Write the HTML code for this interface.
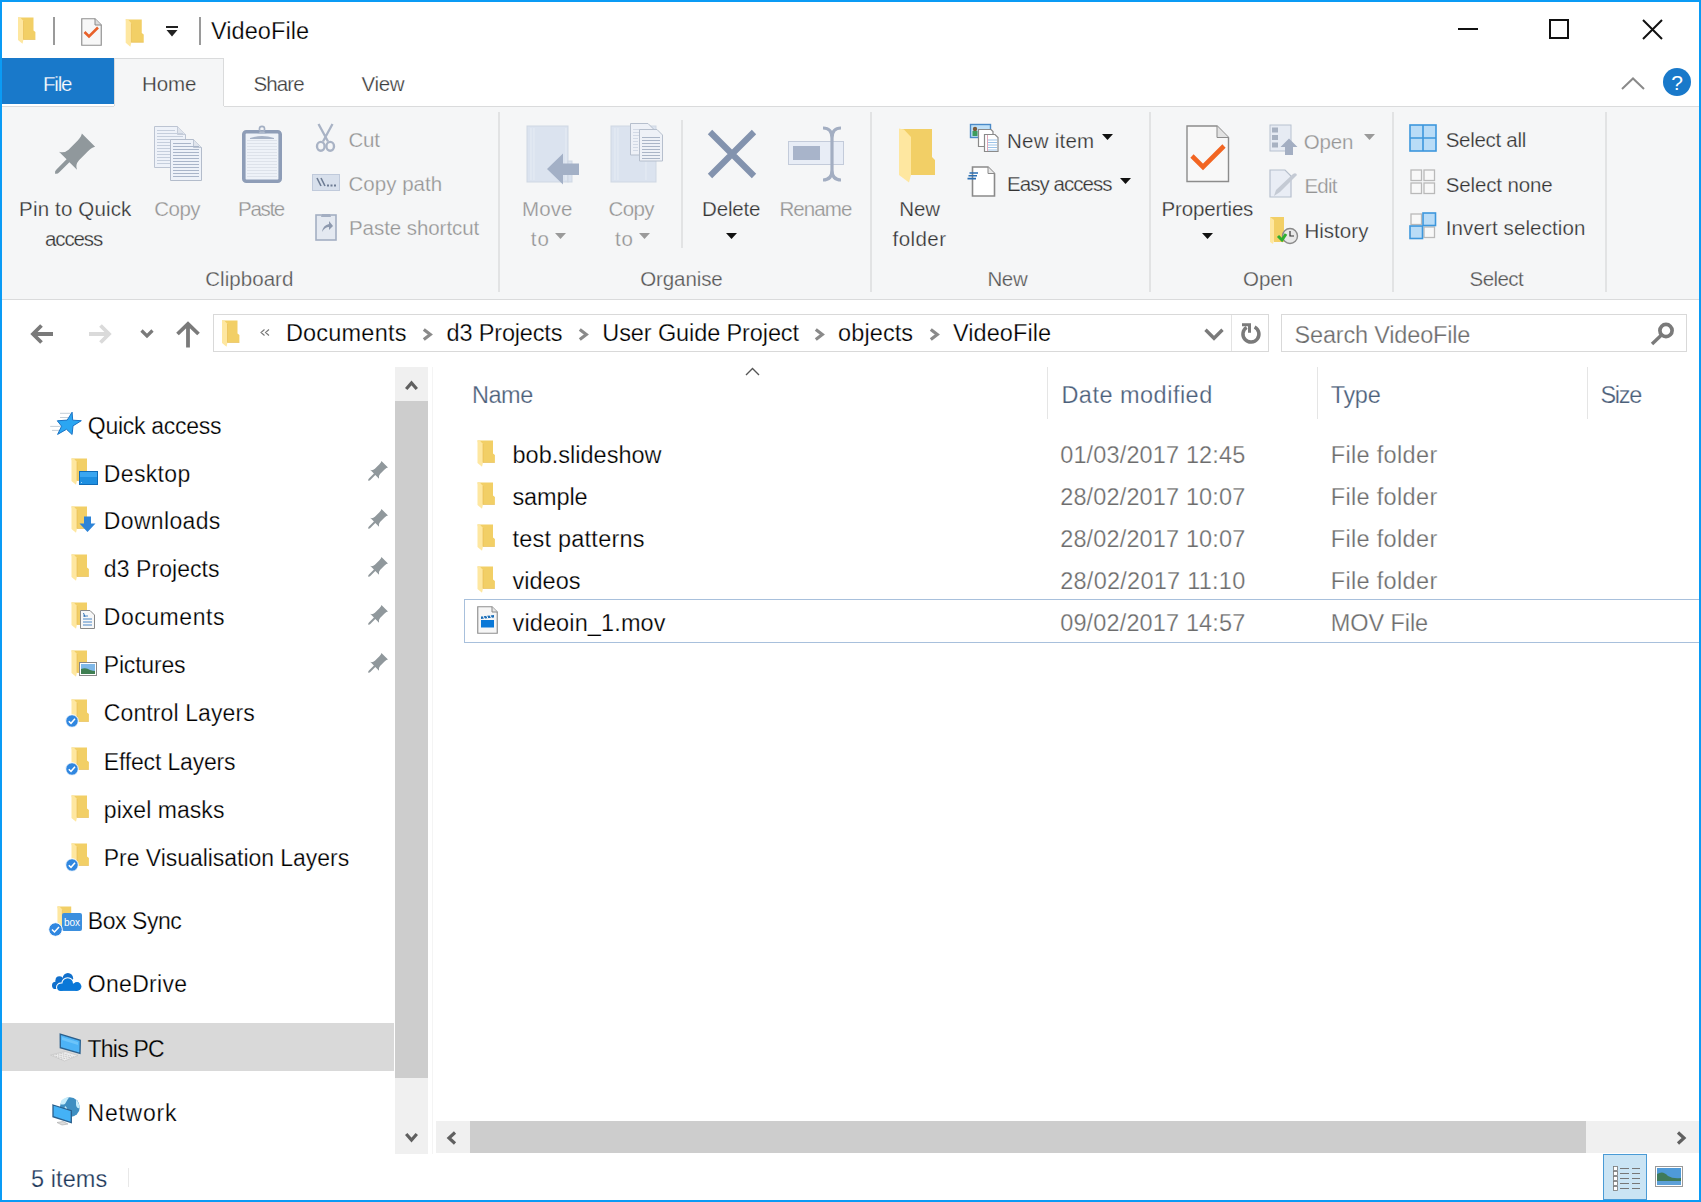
<!DOCTYPE html><html><head><meta charset="utf-8"><style>
html,body{margin:0;padding:0;width:1701px;height:1202px;overflow:hidden;background:#fff}
body{position:relative;font-family:"Liberation Sans",sans-serif}
.t{position:absolute;white-space:nowrap}
svg{overflow:visible}
</style></head><body>
<div style="position:absolute;left:0px;top:0px;width:1701px;height:1202px;background:#0a9bf5"></div>
<div style="position:absolute;left:2px;top:2px;width:1697px;height:1198px;background:#ffffff"></div>
<svg style="position:absolute;left:17px;top:17px" width="19" height="27" viewBox="0 0 18 27"><path d="M0.5 0.5 H16 V13.5 L17.9 15 V22.5 H5.5 Z" fill="#f2cf66"/><path d="M0.5 0.3 L3 0.8 L6 4 V22.5 L5 26.7 L0.5 23 Z" fill="#fee7a0"/><path d="M6 4 V22.5 H17.8" fill="none" stroke="#e6bb4e" stroke-width="0.6"/></svg>
<div style="position:absolute;left:53px;top:17px;width:2px;height:28px;background:#9a9a9a"></div>
<svg style="position:absolute;left:81px;top:18px" width="21" height="28" viewBox="0 0 21 28"><path d="M0.75 0.75 H14 L20.25 7 V27.25 H0.75 Z" fill="#f7f7f7" stroke="#8e8e8e" stroke-width="1.15"/><path d="M14 0.75 V7 H20.25" fill="#dcdcdc" stroke="#8a8a8a" stroke-width="1"/><path d="M3.5 14 L8 18.5 L17 9.5" fill="none" stroke="#e8612a" stroke-width="2.6"/></svg>
<svg style="position:absolute;left:125px;top:19px" width="19" height="28" viewBox="0 0 18 27"><path d="M0.5 0.5 H16 V13.5 L17.9 15 V22.5 H5.5 Z" fill="#f2cf66"/><path d="M0.5 0.3 L3 0.8 L6 4 V22.5 L5 26.7 L0.5 23 Z" fill="#fee7a0"/><path d="M6 4 V22.5 H17.8" fill="none" stroke="#e6bb4e" stroke-width="0.6"/></svg>
<svg style="position:absolute;left:166px;top:26px" width="12" height="11" viewBox="0 0 12 11"><rect x="0" y="0" width="12" height="2" fill="#222"/><path d="M0.5 4 H11.5 L6 10.5 Z" fill="#222"/></svg>
<div style="position:absolute;left:199px;top:17px;width:2px;height:28px;background:#9a9a9a"></div>
<div class="t" style="left:211.0px;top:19.51px;font-size:23.5px;line-height:23.5px;color:#000;letter-spacing:0.061px;-webkit-text-stroke:0.25px #ffffff;">VideoFile</div>
<div style="position:absolute;left:1458px;top:28px;width:20px;height:2px;background:#111"></div>
<div style="position:absolute;left:1549px;top:19px;width:20px;height:20px;border:2px solid #111;box-sizing:border-box"></div>
<svg style="position:absolute;left:1642px;top:19px" width="21" height="21" viewBox="0 0 21 21"><path d="M1 1 L20 20 M20 1 L1 20" stroke="#111" stroke-width="2"/></svg>
<div style="position:absolute;left:2px;top:58px;width:112px;height:46px;background:#1979ca"></div>
<div class="t" style="left:43.0px;top:74.25px;font-size:20.5px;line-height:20.5px;color:#ffffff;letter-spacing:-1.172px;-webkit-text-stroke:0.25px #1979ca;">File</div>
<div style="position:absolute;left:114px;top:58px;width:110px;height:49px;background:#f5f6f7;border:1px solid #dadbdc;border-bottom:none;box-sizing:border-box"></div>
<div class="t" style="left:142.0px;top:74.25px;font-size:20.5px;line-height:20.5px;color:#3c3c3c;letter-spacing:-0.062px;-webkit-text-stroke:0.25px #f5f6f7;">Home</div>
<div class="t" style="left:253.6px;top:74.25px;font-size:20.5px;line-height:20.5px;color:#3c3c3c;letter-spacing:-0.930px;-webkit-text-stroke:0.25px #ffffff;">Share</div>
<div class="t" style="left:361.6px;top:74.25px;font-size:20.5px;line-height:20.5px;color:#3c3c3c;letter-spacing:-0.349px;-webkit-text-stroke:0.25px #ffffff;">View</div>
<svg style="position:absolute;left:1621px;top:77px" width="24" height="13" viewBox="0 0 24 13"><path d="M1 12 L12 1.5 L23 12" fill="none" stroke="#8a8a8a" stroke-width="2"/></svg>
<svg style="position:absolute;left:1663px;top:68px" width="28" height="28" viewBox="0 0 28 28"><circle cx="14" cy="14" r="14" fill="#1979ca"/><text x="14" y="22" font-family="Liberation Sans" font-size="21" fill="#fff" text-anchor="middle">?</text></svg>
<div style="position:absolute;left:2px;top:106px;width:1697px;height:194px;background:#f5f6f7;border-top:1px solid #dadbdc;border-bottom:1px solid #dadbdc;box-sizing:border-box"></div>
<div style="position:absolute;left:114px;top:106px;width:110px;height:2px;background:#f5f6f7"></div>
<div style="position:absolute;left:498px;top:112px;width:2px;height:180px;background:#e2e3e4"></div>
<div style="position:absolute;left:870px;top:112px;width:2px;height:180px;background:#e2e3e4"></div>
<div style="position:absolute;left:1149px;top:112px;width:2px;height:180px;background:#e2e3e4"></div>
<div style="position:absolute;left:1392px;top:112px;width:2px;height:180px;background:#e2e3e4"></div>
<div style="position:absolute;left:1605px;top:112px;width:2px;height:180px;background:#e2e3e4"></div>
<div style="position:absolute;left:681px;top:120px;width:2px;height:128px;background:#e2e3e4"></div>
<div class="t" style="left:205.2px;top:269.05px;font-size:20.5px;line-height:20.5px;color:#555555;letter-spacing:0.056px;-webkit-text-stroke:0.25px #f5f6f7;">Clipboard</div>
<div class="t" style="left:640.2px;top:269.05px;font-size:20.5px;line-height:20.5px;color:#555555;letter-spacing:-0.086px;-webkit-text-stroke:0.25px #f5f6f7;">Organise</div>
<div class="t" style="left:987.4px;top:269.05px;font-size:20.5px;line-height:20.5px;color:#555555;letter-spacing:-0.350px;-webkit-text-stroke:0.25px #f5f6f7;">New</div>
<div class="t" style="left:1243.0px;top:269.05px;font-size:20.5px;line-height:20.5px;color:#555555;letter-spacing:-0.057px;-webkit-text-stroke:0.25px #f5f6f7;">Open</div>
<div class="t" style="left:1469.6px;top:269.05px;font-size:20.5px;line-height:20.5px;color:#555555;letter-spacing:-0.577px;-webkit-text-stroke:0.25px #f5f6f7;">Select</div>
<svg style="position:absolute;left:50px;top:128px" width="50" height="50" viewBox="0 0 50 50"><g transform="translate(5.4 45.3) rotate(45)"><path d="M0 0.5 Q-2.2 -1 -2 -3.5 L-2 -17.8 L-12.7 -17.8 Q-7.8 -20 -7.4 -26 L-7.4 -39 Q-7.6 -44.5 -9.4 -46.8 L9.4 -46.8 Q7.6 -44.5 7.4 -39 L7.4 -26 Q7.8 -20 12.7 -17.8 L2 -17.8 L2 -3.5 Q2.2 -1 0 0.5 Z" fill="#90989c"/></g></svg>
<div class="t" style="left:19.1px;top:199.45px;font-size:20.5px;line-height:20.5px;color:#333333;letter-spacing:0.159px;-webkit-text-stroke:0.25px #f5f6f7;">Pin to Quick</div>
<div class="t" style="left:45.0px;top:229.25px;font-size:20.5px;line-height:20.5px;color:#333333;letter-spacing:-1.122px;-webkit-text-stroke:0.25px #f5f6f7;">access</div>
<svg style="position:absolute;left:153px;top:125px" width="50" height="57" viewBox="0 0 50 57"><path d="M1.5 1.5 H24.5 L32.5 9.5 V42.5 H1.5 Z" fill="#eef2f9" stroke="#bcc4d2" stroke-width="1"/><path d="M24.5 1.5 V9.5 H32.5" fill="#dfe4ec" stroke="#bcc4d2" stroke-width="0.8"/><g stroke="#c5cedc" stroke-width="1"><path d="M4 5.5 H22"/><path d="M4 8.5 H30"/><path d="M4 11.5 H30"/><path d="M4 14.5 H30"/><path d="M4 17.5 H30"/><path d="M4 20.5 H30"/><path d="M4 23.5 H30"/><path d="M4 26.5 H30"/><path d="M4 29.5 H30"/><path d="M4 32.5 H30"/><path d="M4 35.5 H30"/><path d="M4 38.5 H30"/></g><path d="M17.5 14.5 H40.5 L48.5 22.5 V55.5 H17.5 Z" fill="#eef2f9" stroke="#b3bccb" stroke-width="1"/><path d="M40.5 14.5 V22.5 H48.5" fill="#dfe4ec" stroke="#b3bccb" stroke-width="0.8"/><g stroke="#a9b5c9" stroke-width="1"><path d="M20 18.5 H38"/><path d="M20 21.5 H46"/><path d="M20 24.5 H46"/><path d="M20 27.5 H46"/><path d="M20 30.5 H46"/><path d="M20 33.5 H46"/><path d="M20 36.5 H46"/><path d="M20 39.5 H46"/><path d="M20 42.5 H46"/><path d="M20 45.5 H46"/><path d="M20 48.5 H46"/><path d="M20 51.5 H46"/></g></svg>
<div class="t" style="left:154.3px;top:199.45px;font-size:20.5px;line-height:20.5px;color:#949494;letter-spacing:-0.553px;-webkit-text-stroke:0.25px #f5f6f7;">Copy</div>
<svg style="position:absolute;left:241px;top:125px" width="42" height="58" viewBox="0 0 42 58"><rect x="2.8" y="6.8" width="36.4" height="49.4" rx="2.5" fill="#eef2f8" stroke="#8e9db7" stroke-width="3.6"/><g stroke="#dde2ea" stroke-width="1"><path d="M6 15.5 H36"/><path d="M6 18.5 H36"/><path d="M6 21.5 H36"/><path d="M6 24.5 H36"/><path d="M6 27.5 H36"/><path d="M6 30.5 H36"/><path d="M6 33.5 H36"/><path d="M6 36.5 H36"/><path d="M6 39.5 H36"/><path d="M6 42.5 H36"/><path d="M6 45.5 H36"/><path d="M6 48.5 H36"/><path d="M6 51.5 H36"/></g><path d="M9 13 Q21 9 33 13 V14 H9 Z" fill="#a6b2c6"/><path d="M16 9 Q21 4 26 9 Z" fill="#b4bfd1"/><circle cx="21" cy="4" r="2.6" fill="none" stroke="#a3afc3" stroke-width="1.6"/></svg>
<div class="t" style="left:238.1px;top:199.45px;font-size:20.5px;line-height:20.5px;color:#949494;letter-spacing:-1.334px;-webkit-text-stroke:0.25px #f5f6f7;">Paste</div>
<svg style="position:absolute;left:315px;top:123px" width="21" height="30" viewBox="0 0 21 30"><path d="M3.5 1 L13 18.5 M17.5 1 L8 18.5" stroke="#a9b3c5" stroke-width="2.3" fill="none"/><ellipse cx="5.8" cy="23.3" rx="3.8" ry="4.4" fill="none" stroke="#a9b3c5" stroke-width="2.4"/><ellipse cx="15.2" cy="23.3" rx="3.8" ry="4.4" fill="none" stroke="#a9b3c5" stroke-width="2.4"/></svg>
<div class="t" style="left:348.5px;top:130.35px;font-size:20.5px;line-height:20.5px;color:#949494;letter-spacing:-0.203px;-webkit-text-stroke:0.25px #f5f6f7;">Cut</div>
<svg style="position:absolute;left:312px;top:174px" width="28" height="17" viewBox="0 0 28 17"><rect x="0.5" y="0.5" width="27" height="16" fill="#d8e0ec" stroke="#c0cadb"/><path d="M5 4 L9 12 M9 4 L13 12" stroke="#6e7c94" stroke-width="1.6"/><path d="M15 11.5 H17 M18.5 11.5 H20.5 M22 11.5 H24" stroke="#6e7c94" stroke-width="2"/></svg>
<div class="t" style="left:348.5px;top:174.25px;font-size:20.5px;line-height:20.5px;color:#949494;letter-spacing:0.027px;-webkit-text-stroke:0.25px #f5f6f7;">Copy path</div>
<svg style="position:absolute;left:315px;top:211px" width="22" height="30" viewBox="0 0 22 30"><rect x="1" y="4" width="20" height="25" fill="#e4e9f1" stroke="#a3aec2" stroke-width="1.6"/><path d="M7 3 H15 L16 6 H6 Z" fill="#a3aec2"/><path d="M7 21 Q8 14 14 13 V10 L18 15 L14 19 V16 Q10 16 7 21 Z" fill="#8d99ae"/></svg>
<div class="t" style="left:349.0px;top:217.75px;font-size:20.5px;line-height:20.5px;color:#949494;letter-spacing:-0.061px;-webkit-text-stroke:0.25px #f5f6f7;">Paste shortcut</div>
<svg style="position:absolute;left:526px;top:122px" width="56" height="64" viewBox="0 0 56 64"><rect x="1" y="4" width="41" height="56" fill="#dbe3ef" stroke="#cfd7e3"/><rect x="42" y="39" width="4" height="21" fill="#dbe3ef" stroke="#cfd7e3"/><path d="M5 6 V58 M8 6 V58 M40 6 V58" stroke="#e6ecf4" stroke-width="1"/><path d="M21 47 L37 31.5 V41.5 H53 V53 H37 V62.5 Z" fill="#a3b0c6"/></svg>
<div class="t" style="left:522.0px;top:199.45px;font-size:20.5px;line-height:20.5px;color:#949494;letter-spacing:0.120px;-webkit-text-stroke:0.25px #f5f6f7;">Move</div>
<div class="t" style="left:530.8px;top:229.25px;font-size:20.5px;line-height:20.5px;color:#949494;letter-spacing:0.891px;-webkit-text-stroke:0.25px #f5f6f7;">to</div>
<svg style="position:absolute;left:555px;top:233px" width="11" height="6" viewBox="0 0 11 6"><path d="M0 0 H11 L5.5 6 Z" fill="#9a9a9a"/></svg>
<svg style="position:absolute;left:610px;top:122px" width="54" height="62" viewBox="0 0 54 62"><rect x="1" y="4" width="45" height="56" fill="#dbe3ef" stroke="#cfd7e3"/><path d="M5 6 V58 M8 6 V58 M36 40 V58" stroke="#e6ecf4" stroke-width="1"/><path d="M20.5 1.5 H38 L44 7.5 V33 H20.5 Z" fill="#eef1f7" stroke="#b6bfcd"/><g stroke="#d3dae6"><path d="M23 7.5 H36 M23 10.5 H36 M23 13.5 H36 M23 16.5 H28 M23 19.5 H28 M23 22.5 H28 M23 25.5 H28 M23 28.5 H28"/></g><path d="M29.5 7.5 H47 L52.5 13 V39 H29.5 Z" fill="#eef1f7" stroke="#b6bfcd"/><g stroke="#aab5c7"><path d="M32 15.5 H50 M32 18.5 H50 M32 21.5 H50 M32 24.5 H50 M32 27.5 H50 M32 30.5 H50 M32 33.5 H50 M32 36.5 H50"/></g></svg>
<div class="t" style="left:608.5px;top:199.45px;font-size:20.5px;line-height:20.5px;color:#949494;letter-spacing:-0.620px;-webkit-text-stroke:0.25px #f5f6f7;">Copy</div>
<div class="t" style="left:615.0px;top:229.25px;font-size:20.5px;line-height:20.5px;color:#949494;letter-spacing:0.891px;-webkit-text-stroke:0.25px #f5f6f7;">to</div>
<svg style="position:absolute;left:639px;top:233px" width="11" height="6" viewBox="0 0 11 6"><path d="M0 0 H11 L5.5 6 Z" fill="#9a9a9a"/></svg>
<svg style="position:absolute;left:707px;top:129px" width="50" height="50" viewBox="0 0 50 50"><path d="M3 3 L47 47 M47 3 L3 47" stroke="#8393ae" stroke-width="6.2"/></svg>
<div class="t" style="left:702.0px;top:199.45px;font-size:20.5px;line-height:20.5px;color:#333333;letter-spacing:-0.153px;-webkit-text-stroke:0.25px #f5f6f7;">Delete</div>
<svg style="position:absolute;left:726px;top:233px" width="11" height="6" viewBox="0 0 11 6"><path d="M0 0 H11 L5.5 6 Z" fill="#111"/></svg>
<svg style="position:absolute;left:787px;top:126px" width="58" height="56" viewBox="0 0 58 56"><rect x="1.5" y="15.5" width="55" height="23" fill="#e8edf6" stroke="#c3cbda"/><rect x="6" y="20" width="27" height="14" fill="#a8b4ca"/><path d="M36 2 Q45 2 45 12 V44 Q45 54 36 54 M54 2 Q45 2 45 12 M54 54 Q45 54 45 44" fill="none" stroke="#a3aec2" stroke-width="3.2"/></svg>
<div class="t" style="left:779.4px;top:199.45px;font-size:20.5px;line-height:20.5px;color:#949494;letter-spacing:-0.900px;-webkit-text-stroke:0.25px #f5f6f7;">Rename</div>
<svg style="position:absolute;left:898px;top:128px" width="38" height="55" viewBox="0 0 38 55"><path d="M1 1 H34 V29 L37 32 V47 H12 Z" fill="#f2cf66"/><path d="M1 0.5 L6 1.5 L13 9 V47 L11 54.5 L1 47 Z" fill="#fee7a0"/></svg>
<div class="t" style="left:899.3px;top:199.45px;font-size:20.5px;line-height:20.5px;color:#333333;letter-spacing:-0.150px;-webkit-text-stroke:0.25px #f5f6f7;">New</div>
<div class="t" style="left:892.5px;top:229.25px;font-size:20.5px;line-height:20.5px;color:#333333;letter-spacing:0.441px;-webkit-text-stroke:0.25px #f5f6f7;">folder</div>
<svg style="position:absolute;left:969px;top:123px" width="30" height="30" viewBox="0 0 30 30"><rect x="1.5" y="1.5" width="20" height="13" fill="#bfe0f7" stroke="#4a8ac8" stroke-width="1.4"/><circle cx="6" cy="6" r="2.2" fill="#7b5a3a"/><rect x="3.5" y="8" width="5" height="5" fill="#3c9b5e"/><path d="M9.5 6.5 H22 L24 8.5 V23.5 H9.5 Z" fill="#fff" stroke="#8a8a8a" stroke-width="1.2"/><path d="M15.5 11.5 H26 L29 14.5 V28.5 H15.5 Z" fill="#fff" stroke="#8a8a8a" stroke-width="1.2"/><g stroke="#9cc3e8" stroke-width="1"><path d="M19 17 H28 M19 19.5 H28 M19 22 H28 M19 24.5 H28 M19 27 H28"/></g><path d="M18.5 12 V28" stroke="#e0a8b8" stroke-width="1"/></svg>
<div class="t" style="left:1007.1px;top:130.65px;font-size:20.5px;line-height:20.5px;color:#333333;letter-spacing:0.223px;-webkit-text-stroke:0.25px #f5f6f7;">New item</div>
<svg style="position:absolute;left:1102px;top:134px" width="11" height="6" viewBox="0 0 11 6"><path d="M0 0 H11 L5.5 6 Z" fill="#111"/></svg>
<svg style="position:absolute;left:967px;top:166px" width="29" height="31" viewBox="0 0 29 31"><path d="M5.5 1 H21 L27.5 7.5 V30 H5.5 Z" fill="#fff" stroke="#8a8a8a" stroke-width="1.6"/><path d="M21 1 V7.5 H27.5" fill="#e8e8e8" stroke="#8a8a8a" stroke-width="1"/><path d="M2.5 7 H11 M1.5 9.8 H10 M0.5 12.6 H9" stroke="#2b6fb3" stroke-width="1.6"/></svg>
<div class="t" style="left:1007.0px;top:174.25px;font-size:20.5px;line-height:20.5px;color:#333333;letter-spacing:-0.959px;-webkit-text-stroke:0.25px #f5f6f7;">Easy access</div>
<svg style="position:absolute;left:1120px;top:178px" width="11" height="6" viewBox="0 0 11 6"><path d="M0 0 H11 L5.5 6 Z" fill="#111"/></svg>
<svg style="position:absolute;left:1186px;top:125px" width="44" height="58" viewBox="0 0 44 58"><path d="M1 1 H31 L42.5 12.5 V56.5 H1 Z" fill="#f8f8f8" stroke="#8c8c8c" stroke-width="1.4"/><path d="M31 1 V12.5 H42.5" fill="#e2e2e2" stroke="#8c8c8c" stroke-width="1"/><path d="M6 31 L17 42 L38 21" fill="none" stroke="#f26522" stroke-width="4.6"/></svg>
<div class="t" style="left:1161.6px;top:199.45px;font-size:20.5px;line-height:20.5px;color:#333333;letter-spacing:-0.184px;-webkit-text-stroke:0.25px #f5f6f7;">Properties</div>
<svg style="position:absolute;left:1202px;top:233px" width="11" height="6" viewBox="0 0 11 6"><path d="M0 0 H11 L5.5 6 Z" fill="#111"/></svg>
<svg style="position:absolute;left:1269px;top:124px" width="30" height="32" viewBox="0 0 30 32"><rect x="1" y="1" width="21" height="26" fill="#e6ebf3" stroke="#b8c1d0"/><rect x="3" y="3.5" width="6" height="5" fill="#a8b2c2"/><rect x="3" y="11" width="6" height="5" fill="#a8b2c2"/><rect x="3" y="18.5" width="6" height="5" fill="#a8b2c2"/><path d="M11.5 23 L20 14.5 L28.5 23 H24 V31 H16 V23 Z" fill="#a3aec2"/></svg>
<div class="t" style="left:1303.8px;top:131.95px;font-size:20.5px;line-height:20.5px;color:#949494;letter-spacing:-0.191px;-webkit-text-stroke:0.25px #f5f6f7;">Open</div>
<svg style="position:absolute;left:1364px;top:134px" width="11" height="6" viewBox="0 0 11 6"><path d="M0 0 H11 L5.5 6 Z" fill="#9a9a9a"/></svg>
<svg style="position:absolute;left:1269px;top:169px" width="30" height="30" viewBox="0 0 30 30"><path d="M1 1 H16 L22 7 V28 H1 Z" fill="#e9edf5" stroke="#b6bfcd" stroke-width="1.2"/><path d="M5 27 L7 21 L24 5 Q27 3 28 6 L11 23 Z" fill="#c4cad4"/></svg>
<div class="t" style="left:1304.4px;top:176.45px;font-size:20.5px;line-height:20.5px;color:#949494;letter-spacing:-0.776px;-webkit-text-stroke:0.25px #f5f6f7;">Edit</div>
<svg style="position:absolute;left:1269px;top:216px" width="30" height="30" viewBox="0 0 30 30"><path d="M1 1 H15 V26 H5 Z" fill="#f2cf66"/><path d="M1 1 L5 4 V24 L4 28 L1 26 Z" fill="#fee7a0"/><circle cx="21" cy="20" r="7.5" fill="#e8e8e8" stroke="#8a8a8a" stroke-width="1.4"/><path d="M21 15 V20 H25" stroke="#333" stroke-width="1.2" fill="none"/><path d="M9 20 L13 24 L17 18" stroke="#2fae2f" stroke-width="3" fill="none"/></svg>
<div class="t" style="left:1304.4px;top:221.05px;font-size:20.5px;line-height:20.5px;color:#333333;letter-spacing:0.036px;-webkit-text-stroke:0.25px #f5f6f7;">History</div>
<svg style="position:absolute;left:1409px;top:124px" width="28" height="28" viewBox="0 0 28 28"><rect x="1" y="1" width="26" height="26" fill="#b9dcf7" stroke="#3d97dc" stroke-width="1.6"/><path d="M14 1 V27 M1 14 H27" stroke="#3d97dc" stroke-width="1.6"/></svg>
<div class="t" style="left:1445.7px;top:130.15px;font-size:20.5px;line-height:20.5px;color:#333333;letter-spacing:-0.288px;-webkit-text-stroke:0.25px #f5f6f7;">Select all</div>
<svg style="position:absolute;left:1410px;top:169px" width="26" height="26" viewBox="0 0 26 26"><g fill="#f8f8f8" stroke="#b9b9b9" stroke-width="1.3"><rect x="1" y="1" width="10.5" height="10.5"/><rect x="14" y="1" width="10.5" height="10.5"/><rect x="1" y="14" width="10.5" height="10.5"/><rect x="14" y="14" width="10.5" height="10.5"/></g></svg>
<div class="t" style="left:1445.7px;top:174.65px;font-size:20.5px;line-height:20.5px;color:#333333;letter-spacing:-0.131px;-webkit-text-stroke:0.25px #f5f6f7;">Select none</div>
<svg style="position:absolute;left:1409px;top:212px" width="28" height="28" viewBox="0 0 28 28"><g fill="#f8f8f8" stroke="#b9b9b9" stroke-width="1.3"><rect x="2" y="2" width="10.5" height="10.5"/><rect x="15" y="15" width="10.5" height="10.5"/></g><g fill="#b9dcf7" stroke="#3d97dc" stroke-width="1.6"><rect x="14" y="1" width="12.5" height="12.5"/><rect x="1" y="14" width="12.5" height="12.5"/></g></svg>
<div class="t" style="left:1445.7px;top:218.35px;font-size:20.5px;line-height:20.5px;color:#333333;letter-spacing:0.125px;-webkit-text-stroke:0.25px #f5f6f7;">Invert selection</div>
<svg style="position:absolute;left:30px;top:324px" width="24" height="20" viewBox="0 0 24 20"><path d="M11.5 1.5 L3 10 L11.5 18.5 M3.5 10 H23" fill="none" stroke="#7a7a7a" stroke-width="3.8"/></svg>
<svg style="position:absolute;left:88px;top:324px" width="24" height="20" viewBox="0 0 24 20"><path d="M12.5 1.5 L21 10 L12.5 18.5 M20.5 10 H1" fill="none" stroke="#dadada" stroke-width="3.8"/></svg>
<svg style="position:absolute;left:140px;top:329px" width="14" height="10" viewBox="0 0 14 10"><path d="M1.5 1.5 L7 7 L12.5 1.5" fill="none" stroke="#7a7a7a" stroke-width="3.2"/></svg>
<svg style="position:absolute;left:176px;top:322px" width="24" height="26" viewBox="0 0 24 26"><path d="M1.5 12 L12 1.8 L22.5 12 M12 2.5 V25.5" fill="none" stroke="#7a7a7a" stroke-width="3.8"/></svg>
<div style="position:absolute;left:213px;top:314px;width:1056px;height:38px;border:1px solid #d9d9d9;box-sizing:border-box;background:#fff"></div>
<div style="position:absolute;left:1231px;top:315px;width:1px;height:36px;background:#e3e3e3"></div>
<svg style="position:absolute;left:221px;top:320px" width="19" height="27" viewBox="0 0 18 27"><path d="M0.5 0.5 H16 V13.5 L17.9 15 V22.5 H5.5 Z" fill="#f2cf66"/><path d="M0.5 0.3 L3 0.8 L6 4 V22.5 L5 26.7 L0.5 23 Z" fill="#fee7a0"/><path d="M6 4 V22.5 H17.8" fill="none" stroke="#e6bb4e" stroke-width="0.6"/></svg>
<svg style="position:absolute;left:260px;top:329px" width="10" height="7" viewBox="0 0 10 7"><path d="M4.5 0.5 L1 3.5 L4.5 6.5 M9 0.5 L5.5 3.5 L9 6.5" fill="none" stroke="#777" stroke-width="1.1"/></svg>
<div class="t" style="left:285.9px;top:322.41px;font-size:23.5px;line-height:23.5px;color:#000;letter-spacing:0.209px;-webkit-text-stroke:0.25px #ffffff;">Documents</div>
<div class="t" style="left:446.6px;top:322.41px;font-size:23.5px;line-height:23.5px;color:#000;letter-spacing:-0.173px;-webkit-text-stroke:0.25px #ffffff;">d3 Projects</div>
<div class="t" style="left:602.3px;top:322.41px;font-size:23.5px;line-height:23.5px;color:#000;letter-spacing:-0.105px;-webkit-text-stroke:0.25px #ffffff;">User Guide Project</div>
<div class="t" style="left:838.1px;top:322.41px;font-size:23.5px;line-height:23.5px;color:#000;letter-spacing:0.094px;-webkit-text-stroke:0.25px #ffffff;">objects</div>
<div class="t" style="left:953.0px;top:322.41px;font-size:23.5px;line-height:23.5px;color:#000;letter-spacing:0.061px;-webkit-text-stroke:0.25px #ffffff;">VideoFile</div>
<svg style="position:absolute;left:422px;top:328px" width="11" height="13" viewBox="0 0 11 13"><path d="M1.8 1.5 L8.3 6.5 L1.8 11.5" fill="none" stroke="#8a8a8a" stroke-width="3.2"/></svg>
<svg style="position:absolute;left:578px;top:328px" width="11" height="13" viewBox="0 0 11 13"><path d="M1.8 1.5 L8.3 6.5 L1.8 11.5" fill="none" stroke="#8a8a8a" stroke-width="3.2"/></svg>
<svg style="position:absolute;left:814px;top:328px" width="11" height="13" viewBox="0 0 11 13"><path d="M1.8 1.5 L8.3 6.5 L1.8 11.5" fill="none" stroke="#8a8a8a" stroke-width="3.2"/></svg>
<svg style="position:absolute;left:929px;top:328px" width="11" height="13" viewBox="0 0 11 13"><path d="M1.8 1.5 L8.3 6.5 L1.8 11.5" fill="none" stroke="#8a8a8a" stroke-width="3.2"/></svg>
<svg style="position:absolute;left:1204px;top:328px" width="20" height="13" viewBox="0 0 20 13"><path d="M1.5 1.8 L10 10.3 L18.5 1.8" fill="none" stroke="#7a7a7a" stroke-width="3.4"/></svg>
<svg style="position:absolute;left:1239px;top:321px" width="24" height="24" viewBox="0 0 24 24"><path d="M7.6 6.4 A8 8 0 1 0 15.6 6.0" fill="none" stroke="#7a7a7a" stroke-width="3.5"/><path d="M3 2.2 H12 V11.8 H9 V5.2 H3 Z" fill="#7a7a7a"/></svg>
<div style="position:absolute;left:1281px;top:314px;width:406px;height:38px;border:1px solid #d9d9d9;box-sizing:border-box;background:#fff"></div>
<div class="t" style="left:1294.5px;top:324.21px;font-size:23.5px;line-height:23.5px;color:#6d6d6d;letter-spacing:-0.179px;-webkit-text-stroke:0.25px #ffffff;">Search VideoFile</div>
<svg style="position:absolute;left:1650px;top:322px" width="25" height="23" viewBox="0 0 25 23"><circle cx="16" cy="8.5" r="6.1" fill="none" stroke="#7a7a7a" stroke-width="3.7"/><path d="M11.5 13 L2 22" stroke="#7a7a7a" stroke-width="3.4"/></svg>
<div style="position:absolute;left:395px;top:367px;width:33px;height:787px;background:#f0f0f0"></div>
<div style="position:absolute;left:432px;top:367px;width:1px;height:787px;background:#f4f4f4"></div>
<div style="position:absolute;left:395px;top:401px;width:33px;height:677px;background:#cdcdcd"></div>
<svg style="position:absolute;left:405px;top:380px" width="13" height="11" viewBox="0 0 13 11"><path d="M1.2 9 L6.5 3 L11.8 9" fill="none" stroke="#606060" stroke-width="3.2"/></svg>
<svg style="position:absolute;left:405px;top:1132px" width="13" height="11" viewBox="0 0 13 11"><path d="M1.2 2 L6.5 8 L11.8 2" fill="none" stroke="#606060" stroke-width="3.2"/></svg>
<div style="position:absolute;left:2px;top:1023px;width:392px;height:48px;background:#d9d9d9"></div>
<svg style="position:absolute;left:45px;top:405px" width="40" height="36" viewBox="0 0 40 36"><path d="M15 8.3 H25.5 M15 12.5 H23 M5.2 21.4 H15.8 M7 25.4 H14" stroke="#b4c2ce" stroke-width="0.8"/><path d="M27.1 7.2 L27.7 15.2 L36.3 15.7 L28 20.9 L27.1 29.5 L21.5 24.3 L12.6 29.4 L16.6 21.2 L12.3 15.8 L22.2 15.1 Z" fill="#2ba6f2" stroke="#1b73c4" stroke-width="1" stroke-linejoin="round"/></svg>
<div class="t" style="left:87.8px;top:414.73px;font-size:23px;line-height:23px;color:#000;letter-spacing:-0.280px;-webkit-text-stroke:0.25px #ffffff;">Quick access</div>
<svg style="position:absolute;left:71px;top:458.1px" width="18" height="27" viewBox="0 0 18 27"><path d="M0.5 0.5 H16 V13.5 L17.9 15 V22.5 H5.5 Z" fill="#f2cf66"/><path d="M0.5 0.3 L3 0.8 L6 4 V22.5 L5 26.7 L0.5 23 Z" fill="#fee7a0"/><path d="M6 4 V22.5 H17.8" fill="none" stroke="#e6bb4e" stroke-width="0.6"/></svg>
<svg style="position:absolute;left:79px;top:471.1px" width="19" height="14" viewBox="0 0 19 14"><rect x="0.5" y="0.5" width="18" height="13" fill="#1e8fe0" stroke="#0f6cb8"/><rect x="1" y="1" width="17" height="5" fill="#3aa6f0"/><path d="M2 11.5 H17" stroke="#bfe2fb" stroke-width="0.8" stroke-dasharray="1 14"/></svg>
<div class="t" style="left:103.8px;top:462.63px;font-size:23px;line-height:23px;color:#000;letter-spacing:0.352px;-webkit-text-stroke:0.25px #ffffff;">Desktop</div>
<svg style="position:absolute;left:362px;top:456.1px" width="32" height="32" viewBox="0 0 32 32"><g transform="translate(6.4 24.5) rotate(45) scale(0.493)"><path d="M0 0.5 Q-2.2 -1 -2 -3.5 L-2 -17.8 L-12.7 -17.8 Q-7.8 -20 -7.4 -26 L-7.4 -39 Q-7.6 -44.5 -9.4 -46.8 L9.4 -46.8 Q7.6 -44.5 7.4 -39 L7.4 -26 Q7.8 -20 12.7 -17.8 L2 -17.8 L2 -3.5 Q2.2 -1 0 0.5 Z" fill="#90989c"/></g></svg>
<svg style="position:absolute;left:71px;top:505.9px" width="18" height="27" viewBox="0 0 18 27"><path d="M0.5 0.5 H16 V13.5 L17.9 15 V22.5 H5.5 Z" fill="#f2cf66"/><path d="M0.5 0.3 L3 0.8 L6 4 V22.5 L5 26.7 L0.5 23 Z" fill="#fee7a0"/><path d="M6 4 V22.5 H17.8" fill="none" stroke="#e6bb4e" stroke-width="0.6"/></svg>
<svg style="position:absolute;left:79px;top:515.9px" width="17" height="17" viewBox="0 0 17 17"><path d="M5 0.5 H12 V7.5 H16.5 L8.5 16 L0.5 7.5 H5 Z" fill="#2d84d8"/></svg>
<div class="t" style="left:103.8px;top:510.43px;font-size:23px;line-height:23px;color:#000;letter-spacing:0.348px;-webkit-text-stroke:0.25px #ffffff;">Downloads</div>
<svg style="position:absolute;left:362px;top:503.9px" width="32" height="32" viewBox="0 0 32 32"><g transform="translate(6.4 24.5) rotate(45) scale(0.493)"><path d="M0 0.5 Q-2.2 -1 -2 -3.5 L-2 -17.8 L-12.7 -17.8 Q-7.8 -20 -7.4 -26 L-7.4 -39 Q-7.6 -44.5 -9.4 -46.8 L9.4 -46.8 Q7.6 -44.5 7.4 -39 L7.4 -26 Q7.8 -20 12.7 -17.8 L2 -17.8 L2 -3.5 Q2.2 -1 0 0.5 Z" fill="#90989c"/></g></svg>
<svg style="position:absolute;left:71px;top:553.8px" width="18" height="27" viewBox="0 0 18 27"><path d="M0.5 0.5 H16 V13.5 L17.9 15 V22.5 H5.5 Z" fill="#f2cf66"/><path d="M0.5 0.3 L3 0.8 L6 4 V22.5 L5 26.7 L0.5 23 Z" fill="#fee7a0"/><path d="M6 4 V22.5 H17.8" fill="none" stroke="#e6bb4e" stroke-width="0.6"/></svg>
<div class="t" style="left:103.8px;top:558.33px;font-size:23px;line-height:23px;color:#000;letter-spacing:0.072px;-webkit-text-stroke:0.25px #ffffff;">d3 Projects</div>
<svg style="position:absolute;left:362px;top:551.8px" width="32" height="32" viewBox="0 0 32 32"><g transform="translate(6.4 24.5) rotate(45) scale(0.493)"><path d="M0 0.5 Q-2.2 -1 -2 -3.5 L-2 -17.8 L-12.7 -17.8 Q-7.8 -20 -7.4 -26 L-7.4 -39 Q-7.6 -44.5 -9.4 -46.8 L9.4 -46.8 Q7.6 -44.5 7.4 -39 L7.4 -26 Q7.8 -20 12.7 -17.8 L2 -17.8 L2 -3.5 Q2.2 -1 0 0.5 Z" fill="#90989c"/></g></svg>
<svg style="position:absolute;left:71px;top:601.6px" width="18" height="27" viewBox="0 0 18 27"><path d="M0.5 0.5 H16 V13.5 L17.9 15 V22.5 H5.5 Z" fill="#f2cf66"/><path d="M0.5 0.3 L3 0.8 L6 4 V22.5 L5 26.7 L0.5 23 Z" fill="#fee7a0"/><path d="M6 4 V22.5 H17.8" fill="none" stroke="#e6bb4e" stroke-width="0.6"/></svg>
<svg style="position:absolute;left:80px;top:609.6px" width="15" height="19" viewBox="0 0 15 19"><path d="M0.5 0.5 H10 L14.5 5 V18.5 H0.5 Z" fill="#f7f7f7" stroke="#888"/><path d="M3 6 H8 M3 9 H12 M3 12 H12 M3 15 H12" stroke="#4a86c6" stroke-width="1"/><path d="M3.5 3 L5 7" stroke="#2f6fb5" stroke-width="1"/></svg>
<div class="t" style="left:103.8px;top:606.13px;font-size:23px;line-height:23px;color:#000;letter-spacing:0.532px;-webkit-text-stroke:0.25px #ffffff;">Documents</div>
<svg style="position:absolute;left:362px;top:599.6px" width="32" height="32" viewBox="0 0 32 32"><g transform="translate(6.4 24.5) rotate(45) scale(0.493)"><path d="M0 0.5 Q-2.2 -1 -2 -3.5 L-2 -17.8 L-12.7 -17.8 Q-7.8 -20 -7.4 -26 L-7.4 -39 Q-7.6 -44.5 -9.4 -46.8 L9.4 -46.8 Q7.6 -44.5 7.4 -39 L7.4 -26 Q7.8 -20 12.7 -17.8 L2 -17.8 L2 -3.5 Q2.2 -1 0 0.5 Z" fill="#90989c"/></g></svg>
<svg style="position:absolute;left:71px;top:649.5px" width="18" height="27" viewBox="0 0 18 27"><path d="M0.5 0.5 H16 V13.5 L17.9 15 V22.5 H5.5 Z" fill="#f2cf66"/><path d="M0.5 0.3 L3 0.8 L6 4 V22.5 L5 26.7 L0.5 23 Z" fill="#fee7a0"/><path d="M6 4 V22.5 H17.8" fill="none" stroke="#e6bb4e" stroke-width="0.6"/></svg>
<svg style="position:absolute;left:79px;top:661.5px" width="18" height="14" viewBox="0 0 18 14"><rect x="0.5" y="0.5" width="17" height="13" fill="#fff" stroke="#888"/><rect x="2" y="2" width="14" height="10" fill="#7fb8e8"/><path d="M2 7 Q7 5 11 8 Q14 9 16 9 V12 H2 Z" fill="#3f7f52"/></svg>
<div class="t" style="left:103.8px;top:654.03px;font-size:23px;line-height:23px;color:#000;letter-spacing:-0.199px;-webkit-text-stroke:0.25px #ffffff;">Pictures</div>
<svg style="position:absolute;left:362px;top:647.5px" width="32" height="32" viewBox="0 0 32 32"><g transform="translate(6.4 24.5) rotate(45) scale(0.493)"><path d="M0 0.5 Q-2.2 -1 -2 -3.5 L-2 -17.8 L-12.7 -17.8 Q-7.8 -20 -7.4 -26 L-7.4 -39 Q-7.6 -44.5 -9.4 -46.8 L9.4 -46.8 Q7.6 -44.5 7.4 -39 L7.4 -26 Q7.8 -20 12.7 -17.8 L2 -17.8 L2 -3.5 Q2.2 -1 0 0.5 Z" fill="#90989c"/></g></svg>
<svg style="position:absolute;left:71px;top:698.8px" width="18" height="27" viewBox="0 0 18 27"><path d="M0.5 0.5 H16 V13.5 L17.9 15 V22.5 H5.5 Z" fill="#f2cf66"/><path d="M0.5 0.3 L3 0.8 L6 4 V22.5 L5 26.7 L0.5 23 Z" fill="#fee7a0"/><path d="M6 4 V22.5 H17.8" fill="none" stroke="#e6bb4e" stroke-width="0.6"/></svg>
<svg style="position:absolute;left:65px;top:713.8px" width="14" height="14" viewBox="0 0 14 14"><circle cx="7" cy="7" r="6.3" fill="#3087e0" stroke="#fff" stroke-width="1"/><path d="M3.8 7.2 L6 9.3 L10 4.8" fill="none" stroke="#fff" stroke-width="1.5"/></svg>
<div class="t" style="left:103.8px;top:702.33px;font-size:23px;line-height:23px;color:#000;letter-spacing:0.100px;-webkit-text-stroke:0.25px #ffffff;">Control Layers</div>
<svg style="position:absolute;left:71px;top:747.0px" width="18" height="27" viewBox="0 0 18 27"><path d="M0.5 0.5 H16 V13.5 L17.9 15 V22.5 H5.5 Z" fill="#f2cf66"/><path d="M0.5 0.3 L3 0.8 L6 4 V22.5 L5 26.7 L0.5 23 Z" fill="#fee7a0"/><path d="M6 4 V22.5 H17.8" fill="none" stroke="#e6bb4e" stroke-width="0.6"/></svg>
<svg style="position:absolute;left:65px;top:762.0px" width="14" height="14" viewBox="0 0 14 14"><circle cx="7" cy="7" r="6.3" fill="#3087e0" stroke="#fff" stroke-width="1"/><path d="M3.8 7.2 L6 9.3 L10 4.8" fill="none" stroke="#fff" stroke-width="1.5"/></svg>
<div class="t" style="left:103.8px;top:750.53px;font-size:23px;line-height:23px;color:#000;letter-spacing:-0.169px;-webkit-text-stroke:0.25px #ffffff;">Effect Layers</div>
<svg style="position:absolute;left:71px;top:795.2px" width="18" height="27" viewBox="0 0 18 27"><path d="M0.5 0.5 H16 V13.5 L17.9 15 V22.5 H5.5 Z" fill="#f2cf66"/><path d="M0.5 0.3 L3 0.8 L6 4 V22.5 L5 26.7 L0.5 23 Z" fill="#fee7a0"/><path d="M6 4 V22.5 H17.8" fill="none" stroke="#e6bb4e" stroke-width="0.6"/></svg>
<div class="t" style="left:103.8px;top:798.73px;font-size:23px;line-height:23px;color:#000;letter-spacing:0.044px;-webkit-text-stroke:0.25px #ffffff;">pixel masks</div>
<svg style="position:absolute;left:71px;top:843.2px" width="18" height="27" viewBox="0 0 18 27"><path d="M0.5 0.5 H16 V13.5 L17.9 15 V22.5 H5.5 Z" fill="#f2cf66"/><path d="M0.5 0.3 L3 0.8 L6 4 V22.5 L5 26.7 L0.5 23 Z" fill="#fee7a0"/><path d="M6 4 V22.5 H17.8" fill="none" stroke="#e6bb4e" stroke-width="0.6"/></svg>
<svg style="position:absolute;left:65px;top:858.2px" width="14" height="14" viewBox="0 0 14 14"><circle cx="7" cy="7" r="6.3" fill="#3087e0" stroke="#fff" stroke-width="1"/><path d="M3.8 7.2 L6 9.3 L10 4.8" fill="none" stroke="#fff" stroke-width="1.5"/></svg>
<div class="t" style="left:103.8px;top:846.73px;font-size:23px;line-height:23px;color:#000;letter-spacing:-0.042px;-webkit-text-stroke:0.25px #ffffff;">Pre Visualisation Layers</div>
<svg style="position:absolute;left:56px;top:906px" width="18" height="24" viewBox="0 0 18 27"><path d="M0.5 0.5 H16 V13.5 L17.9 15 V22.5 H5.5 Z" fill="#f2cf66"/><path d="M0.5 0.3 L3 0.8 L6 4 V22.5 L5 26.7 L0.5 23 Z" fill="#fee7a0"/><path d="M6 4 V22.5 H17.8" fill="none" stroke="#e6bb4e" stroke-width="0.6"/></svg>
<svg style="position:absolute;left:62px;top:913px" width="20" height="18" viewBox="0 0 20 18"><rect x="0" y="0" width="20" height="18" rx="2" fill="#3b8fde"/><text x="10" y="13" font-family="Liberation Sans" font-size="10" fill="#fff" text-anchor="middle">box</text></svg>
<svg style="position:absolute;left:48px;top:922px" width="15" height="15" viewBox="0 0 15 15"><circle cx="7.5" cy="7.5" r="6.8" fill="#3087e0" stroke="#fff" stroke-width="1"/><path d="M4 7.5 L6.5 10 L11 5" fill="none" stroke="#fff" stroke-width="1.5"/></svg>
<div class="t" style="left:87.8px;top:909.53px;font-size:23px;line-height:23px;color:#000;letter-spacing:-0.453px;-webkit-text-stroke:0.25px #ffffff;">Box Sync</div>
<svg style="position:absolute;left:50px;top:972px" width="32" height="22" viewBox="0 0 32 22"><circle cx="5.6" cy="13.4" r="3.6" fill="#1170cc"/><circle cx="9.4" cy="8.2" r="3.9" fill="#1170cc"/><circle cx="17.9" cy="6.2" r="5.2" fill="#1170cc"/><rect x="5.6" y="8.5" width="14" height="8.5" fill="#1170cc"/><circle cx="17.7" cy="11.6" r="6.4" fill="#ffffff"/><circle cx="27" cy="14.5" r="5.5" fill="#ffffff"/><circle cx="10.7" cy="15.3" r="4.7" fill="#ffffff"/><rect x="10.7" y="11.6" width="16.3" height="8.4" fill="#ffffff"/><circle cx="17.7" cy="11.6" r="5.3" fill="#0a78d8"/><circle cx="27" cy="14.5" r="4.4" fill="#0a78d8"/><circle cx="10.7" cy="15.3" r="3.6" fill="#0a78d8"/><rect x="10.7" y="11.6" width="16.3" height="7.3" fill="#0a78d8"/></svg>
<div class="t" style="left:87.8px;top:972.93px;font-size:23px;line-height:23px;color:#000;letter-spacing:0.306px;-webkit-text-stroke:0.25px #ffffff;">OneDrive</div>
<svg style="position:absolute;left:45px;top:1028px" width="40" height="36" viewBox="0 0 40 36"><path d="M5.5 27 L20 23.5 L33 27.5 L19.5 33 Z" fill="#ececec" stroke="#c4c4c4" stroke-width="0.7"/><path d="M8 27.3 L20 24.8 M10.5 28.7 L23 26 M13 30 L26 27.3 M16 31.2 L29 28.6" stroke="#bdbdbd" stroke-width="0.8" stroke-dasharray="1.5 1"/><path d="M15.2 6.2 L35.3 12.3 L35 25.3 L15.3 19.7 Z" fill="#4db3f6" stroke="#2a5f8c" stroke-width="1.3"/><path d="M17 9 L33 14 V17 L17 12 Z" fill="#6cc4fa"/></svg>
<div class="t" style="left:87.6px;top:1037.63px;font-size:23px;line-height:23px;color:#000;letter-spacing:-0.799px;-webkit-text-stroke:0.25px #d9d9d9;">This PC</div>
<svg style="position:absolute;left:45px;top:1092px" width="40" height="36" viewBox="0 0 40 36"><circle cx="24.8" cy="15.3" r="10" fill="#3f8fc2"/><path d="M16 9 Q19 5 24 5.5 Q22 8 20 12 Q17 13 15.5 12 Z M31 7.5 Q34.5 11 34.8 16 Q32 17 31 13 Z M20 14 Q23 16 22 19 L19 19 Z" fill="#c6ecfa"/><path d="M12 30.5 L18 29.5 L23 32 L17 33 Z" fill="#dcdcdc" stroke="#aaa" stroke-width="0.6"/><path d="M8 13 L26.3 18.7 V30.5 L8 24.7 Z" fill="#44b2f6" stroke="#2a5f8c" stroke-width="1.3"/></svg>
<div class="t" style="left:87.6px;top:1101.73px;font-size:23px;line-height:23px;color:#000;letter-spacing:0.740px;-webkit-text-stroke:0.25px #ffffff;">Network</div>
<div class="t" style="left:471.9px;top:384.21px;font-size:23.5px;line-height:23.5px;color:#4c607a;letter-spacing:-0.457px;-webkit-text-stroke:0.25px #ffffff;">Name</div>
<div class="t" style="left:1061.4px;top:384.21px;font-size:23.5px;line-height:23.5px;color:#4c607a;letter-spacing:0.487px;-webkit-text-stroke:0.25px #ffffff;">Date modified</div>
<div class="t" style="left:1330.7px;top:384.21px;font-size:23.5px;line-height:23.5px;color:#4c607a;letter-spacing:-0.312px;-webkit-text-stroke:0.25px #ffffff;">Type</div>
<div class="t" style="left:1600.4px;top:384.21px;font-size:23.5px;line-height:23.5px;color:#4c607a;letter-spacing:-1.234px;-webkit-text-stroke:0.25px #ffffff;">Size</div>
<div style="position:absolute;left:1047px;top:367px;width:1px;height:52px;background:#e5e5e5"></div>
<div style="position:absolute;left:1317px;top:367px;width:1px;height:52px;background:#e5e5e5"></div>
<div style="position:absolute;left:1587px;top:367px;width:1px;height:52px;background:#e5e5e5"></div>
<svg style="position:absolute;left:745px;top:367px" width="15" height="9" viewBox="0 0 15 9"><path d="M1 8 L7.5 1.5 L14 8" fill="none" stroke="#555" stroke-width="1.4"/></svg>
<div style="position:absolute;left:464px;top:599px;width:1235px;height:44px;border:1px solid #a8c0dc;border-right:none;box-sizing:border-box"></div>
<svg style="position:absolute;left:477px;top:440.1px" width="18" height="27" viewBox="0 0 18 27"><path d="M0.5 0.5 H16 V13.5 L17.9 15 V22.5 H5.5 Z" fill="#f2cf66"/><path d="M0.5 0.3 L3 0.8 L6 4 V22.5 L5 26.7 L0.5 23 Z" fill="#fee7a0"/><path d="M6 4 V22.5 H17.8" fill="none" stroke="#e6bb4e" stroke-width="0.6"/></svg>
<div class="t" style="left:512.5px;top:443.71px;font-size:23.5px;line-height:23.5px;color:#000;letter-spacing:0.010px;-webkit-text-stroke:0.25px #ffffff;">bob.slideshow</div>
<div class="t" style="left:1060.2px;top:443.71px;font-size:23.5px;line-height:23.5px;color:#6d6d6d;letter-spacing:0.142px;-webkit-text-stroke:0.25px #ffffff;">01/03/2017 12:45</div>
<div class="t" style="left:1330.7px;top:443.71px;font-size:23.5px;line-height:23.5px;color:#6d6d6d;letter-spacing:0.334px;-webkit-text-stroke:0.25px #ffffff;">File folder</div>
<svg style="position:absolute;left:477px;top:482.1px" width="18" height="27" viewBox="0 0 18 27"><path d="M0.5 0.5 H16 V13.5 L17.9 15 V22.5 H5.5 Z" fill="#f2cf66"/><path d="M0.5 0.3 L3 0.8 L6 4 V22.5 L5 26.7 L0.5 23 Z" fill="#fee7a0"/><path d="M6 4 V22.5 H17.8" fill="none" stroke="#e6bb4e" stroke-width="0.6"/></svg>
<div class="t" style="left:512.5px;top:485.71px;font-size:23.5px;line-height:23.5px;color:#000;letter-spacing:-0.147px;-webkit-text-stroke:0.25px #ffffff;">sample</div>
<div class="t" style="left:1060.2px;top:485.71px;font-size:23.5px;line-height:23.5px;color:#6d6d6d;letter-spacing:0.142px;-webkit-text-stroke:0.25px #ffffff;">28/02/2017 10:07</div>
<div class="t" style="left:1330.7px;top:485.71px;font-size:23.5px;line-height:23.5px;color:#6d6d6d;letter-spacing:0.334px;-webkit-text-stroke:0.25px #ffffff;">File folder</div>
<svg style="position:absolute;left:477px;top:524.1px" width="18" height="27" viewBox="0 0 18 27"><path d="M0.5 0.5 H16 V13.5 L17.9 15 V22.5 H5.5 Z" fill="#f2cf66"/><path d="M0.5 0.3 L3 0.8 L6 4 V22.5 L5 26.7 L0.5 23 Z" fill="#fee7a0"/><path d="M6 4 V22.5 H17.8" fill="none" stroke="#e6bb4e" stroke-width="0.6"/></svg>
<div class="t" style="left:512.5px;top:527.71px;font-size:23.5px;line-height:23.5px;color:#000;letter-spacing:0.225px;-webkit-text-stroke:0.25px #ffffff;">test patterns</div>
<div class="t" style="left:1060.2px;top:527.71px;font-size:23.5px;line-height:23.5px;color:#6d6d6d;letter-spacing:0.142px;-webkit-text-stroke:0.25px #ffffff;">28/02/2017 10:07</div>
<div class="t" style="left:1330.7px;top:527.71px;font-size:23.5px;line-height:23.5px;color:#6d6d6d;letter-spacing:0.334px;-webkit-text-stroke:0.25px #ffffff;">File folder</div>
<svg style="position:absolute;left:477px;top:566.1px" width="18" height="27" viewBox="0 0 18 27"><path d="M0.5 0.5 H16 V13.5 L17.9 15 V22.5 H5.5 Z" fill="#f2cf66"/><path d="M0.5 0.3 L3 0.8 L6 4 V22.5 L5 26.7 L0.5 23 Z" fill="#fee7a0"/><path d="M6 4 V22.5 H17.8" fill="none" stroke="#e6bb4e" stroke-width="0.6"/></svg>
<div class="t" style="left:512.5px;top:569.71px;font-size:23.5px;line-height:23.5px;color:#000;letter-spacing:0.019px;-webkit-text-stroke:0.25px #ffffff;">videos</div>
<div class="t" style="left:1060.2px;top:569.71px;font-size:23.5px;line-height:23.5px;color:#6d6d6d;letter-spacing:0.258px;-webkit-text-stroke:0.25px #ffffff;">28/02/2017 11:10</div>
<div class="t" style="left:1330.7px;top:569.71px;font-size:23.5px;line-height:23.5px;color:#6d6d6d;letter-spacing:0.334px;-webkit-text-stroke:0.25px #ffffff;">File folder</div>
<svg style="position:absolute;left:477px;top:606px" width="21" height="28" viewBox="0 0 21 28"><path d="M0.75 0.75 H15 L20.25 6 V27.25 H0.75 Z" fill="#f6f6f6" stroke="#8e8e8e" stroke-width="1.15"/><path d="M15 0.75 V6 H20.25" fill="#e6e6e6" stroke="#8a8a8a" stroke-width="1"/><rect x="4" y="14" width="13" height="7.5" fill="#0a78d7"/><path d="M4 10.5 L17 9 L17 11.5 L4 13 Z" fill="#1b6eb8"/><path d="M6 9.8 L7.5 13 M9.5 9.4 L11 12.6 M13 9 L14.5 12.2" stroke="#fff" stroke-width="1"/></svg>
<div class="t" style="left:512.5px;top:611.71px;font-size:23.5px;line-height:23.5px;color:#000;letter-spacing:0.126px;-webkit-text-stroke:0.25px #ffffff;">videoin_1.mov</div>
<div class="t" style="left:1060.2px;top:611.71px;font-size:23.5px;line-height:23.5px;color:#6d6d6d;letter-spacing:0.142px;-webkit-text-stroke:0.25px #ffffff;">09/02/2017 14:57</div>
<div class="t" style="left:1330.7px;top:611.71px;font-size:23.5px;line-height:23.5px;color:#6d6d6d;letter-spacing:-0.060px;-webkit-text-stroke:0.25px #ffffff;">MOV File</div>
<div style="position:absolute;left:436px;top:1121px;width:1263px;height:32px;background:#f0f0f0"></div>
<div style="position:absolute;left:470px;top:1121px;width:1116px;height:32px;background:#cdcdcd"></div>
<svg style="position:absolute;left:446px;top:1131px" width="11" height="14" viewBox="0 0 11 14"><path d="M9 1.5 L3 7 L9 12.5" fill="none" stroke="#606060" stroke-width="3.2"/></svg>
<svg style="position:absolute;left:1676px;top:1131px" width="11" height="14" viewBox="0 0 11 14"><path d="M2 1.5 L8 7 L2 12.5" fill="none" stroke="#606060" stroke-width="3.2"/></svg>
<div class="t" style="left:30.9px;top:1167.71px;font-size:23.5px;line-height:23.5px;color:#1e395b;letter-spacing:0.111px;-webkit-text-stroke:0.25px #ffffff;">5 items</div>
<div style="position:absolute;left:128px;top:1168px;width:1px;height:19px;background:#e8e8e8"></div>
<div style="position:absolute;left:1603px;top:1154px;width:44px;height:46px;background:#cae4f4;border:1px solid #4a9bd6;box-sizing:border-box"></div>
<svg style="position:absolute;left:1613px;top:1166px" width="28" height="25" viewBox="0 0 28 25"><g fill="#fff" stroke="#777" stroke-width="0.8"><rect x="0.5" y="0.5" width="4" height="4"/><rect x="0.5" y="5.5" width="4" height="4"/><rect x="0.5" y="10.5" width="4" height="4"/><rect x="0.5" y="15.5" width="4" height="4"/><rect x="0.5" y="20.5" width="4" height="4"/></g><path d="M7 2.5 H16 M19 2.5 H27 M7 7.5 H16 M19 7.5 H27 M7 12.5 H16 M19 12.5 H27 M7 17.5 H16 M19 17.5 H27 M7 22.5 H16 M19 22.5 H27" stroke="#777" stroke-width="1"/></svg>
<svg style="position:absolute;left:1655px;top:1166px" width="28" height="21" viewBox="0 0 28 21"><rect x="0.5" y="0.5" width="27" height="20" fill="#fff" stroke="#999"/><rect x="2" y="2" width="24" height="17" fill="#4f9ad8"/><path d="M2 8 Q8 4 13 10 Q18 13 26 12 V19 H2 Z" fill="#3f7a5a"/><path d="M2 15 H26 V19 H2 Z" fill="#5da0d8"/></svg>
</body></html>
